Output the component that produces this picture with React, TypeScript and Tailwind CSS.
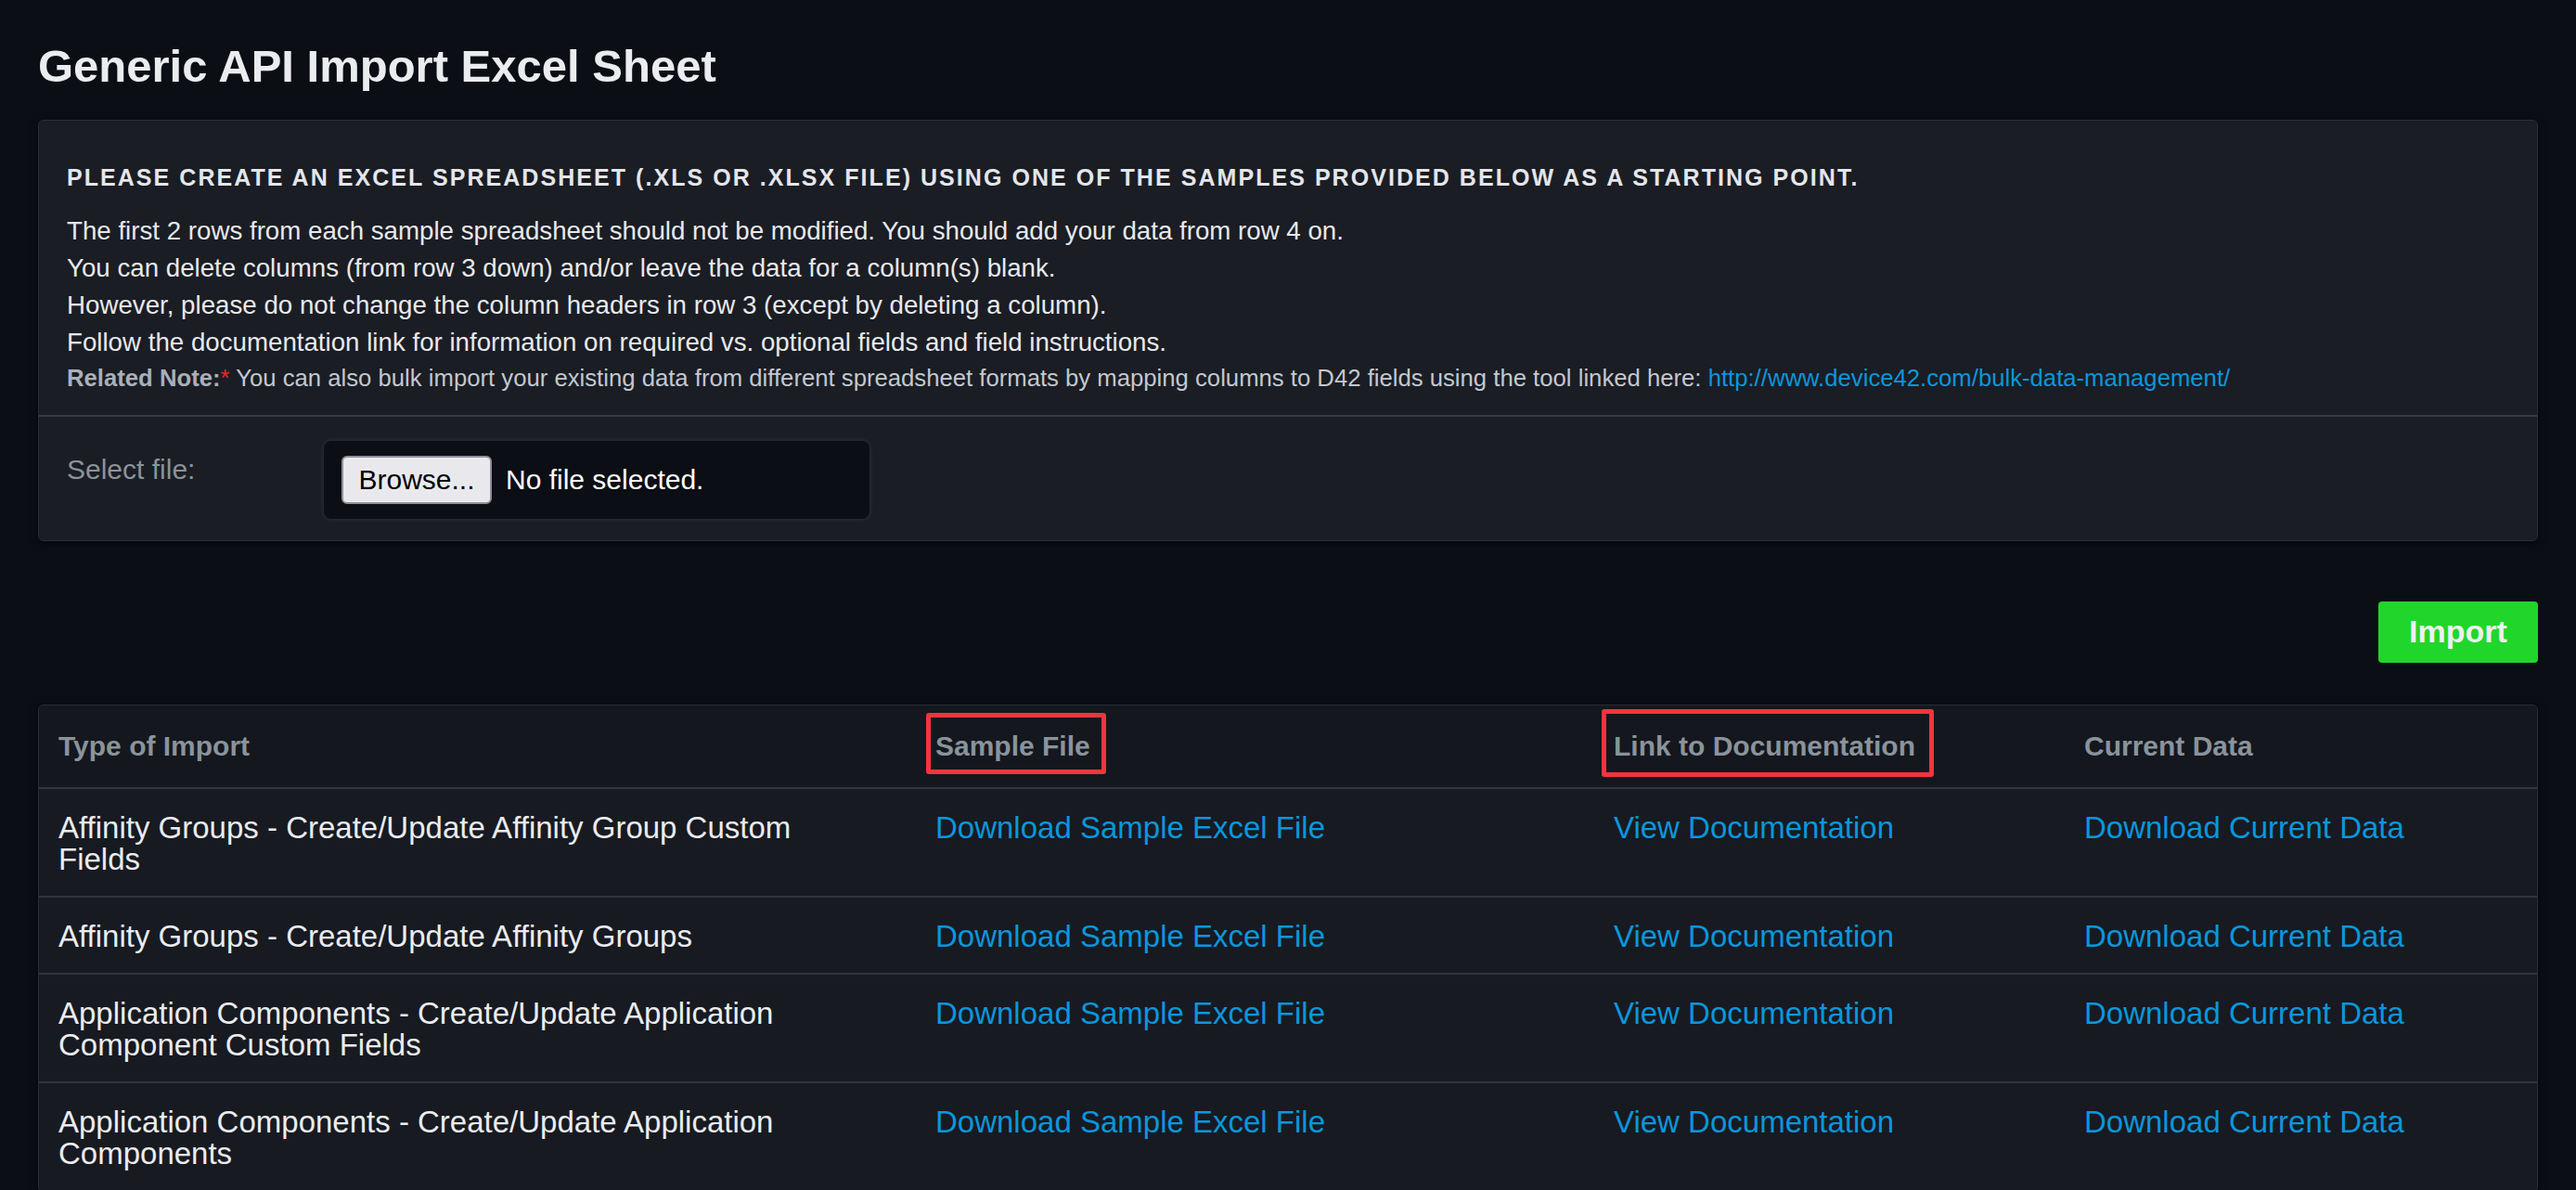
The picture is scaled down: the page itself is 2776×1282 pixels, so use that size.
const rows = [
  "Affinity Groups - Create/Update Affinity Group Custom Fields",
  "Affinity Groups - Create/Update Affinity Groups",
  "Application Components - Create/Update Application Component Custom Fields",
  "Application Components - Create/Update Application Components",
];

function Boxed({ children, cls }: { children: React.ReactNode; cls: string }) {
  return (
    <span className="relative inline-block">
      {children}
      <span className={"pointer-events-none absolute rounded-[3px] border-[5px] border-[#f5333f] " + cls} />
    </span>
  );
}

export default function App() {
  return (
    <div className="h-screen overflow-hidden bg-[#0b0e15] px-[41px] pt-[47px] font-['Liberation_Sans',Arial,sans-serif] text-[#e8e9ec]">
      <h1 className="text-[49px] font-bold leading-none text-[#ebecef]">Generic API Import Excel Sheet</h1>

      <div className="mt-[33px] rounded-[6px] border border-[#2a2d34] bg-[#1a1d24] shadow-[0_2px_10px_rgba(0,0,0,0.6)]">
        <div className="pl-[30px] pt-[49px] pb-[22px]">
          <h2 className="text-[25px] font-bold leading-none tracking-[2.05px] text-[#e4e6ea]">
            PLEASE CREATE AN EXCEL SPREADSHEET (.XLS OR .XLSX FILE) USING ONE OF THE SAMPLES PROVIDED BELOW AS A STARTING POINT.
          </h2>
          <div className="mt-[24.5px] text-[27.7px] leading-[40px] text-[#e8e9ec]">
            <p>The first 2 rows from each sample spreadsheet should not be modified. You should add your data from row 4 on.</p>
            <p>You can delete columns (from row 3 down) and/or leave the data for a column(s) blank.</p>
            <p>However, please do not change the column headers in row 3 (except by deleting a column).</p>
            <p>Follow the documentation link for information on required vs. optional fields and field instructions.</p>
          </div>
          <p className="text-[25.7px] leading-[36px] text-[#c3c8cf]">
            <span className="font-bold text-[#a9b0ba]">Related Note:</span>
            <span className="text-[#e5262d]">*</span> You can also bulk import your existing data from different spreadsheet formats by mapping columns to D42 fields using the tool linked here:{" "}
            <a className="text-[#0b96dc]" href="#">http://www.device42.com/bulk-data-management/</a>
          </p>
        </div>
        <div className="flex border-t-2 border-[#373a41] pl-[30px] pt-[26px] pb-[23px]">
          <div className="w-[277px] pt-[14px] text-[30px] leading-[34px] text-[#8a929a]">Select file:</div>
          <div className="flex h-[84px] w-[588px] items-center gap-[15px] rounded-[8px] bg-[#0b0e14] pl-[19px] shadow-[0_0_5px_rgba(255,255,255,0.12)]">
            <span className="flex h-[52px] w-[162px] items-center justify-center rounded-[6px] border-2 border-[#8f8f9d] bg-[#e9e9ed] text-[30px] text-black">
              Browse...
            </span>
            <span className="text-[30px] text-white">No file selected.</span>
          </div>
        </div>
      </div>

      <div className="mt-[65px] flex justify-end">
        <button className="h-[66px] w-[172px] rounded-[4px] bg-[#21d62a] text-[34px] font-bold text-[#eef0ef]">Import</button>
      </div>

      <div className="mt-[45px] overflow-hidden rounded-[6px] border border-[#2a2d34] bg-[#171a21] shadow-[0_2px_10px_rgba(0,0,0,0.6)]">
        <table className="w-full table-fixed border-collapse">
          <colgroup>
            <col className="w-[945px]" />
            <col className="w-[731px]" />
            <col className="w-[507px]" />
            <col />
          </colgroup>
          <thead>
            <tr className="border-b-2 border-[#33363d] bg-[#14171d]">
              <th className="pl-[21px] pt-[27px] pb-[27px] text-left align-top text-[30px] font-bold leading-[34px] text-[#8a939c]">Type of Import</th>
              <th className="pl-[21px] pt-[27px] pb-[27px] text-left align-top text-[30px] font-bold leading-[34px] text-[#8a939c]">
                <Boxed cls="-left-[10px] -right-[17px] -top-[19px] -bottom-[13px]">Sample File</Boxed>
              </th>
              <th className="pl-[21px] pt-[27px] pb-[27px] text-left align-top text-[30px] font-bold leading-[34px] text-[#8a939c]">
                <Boxed cls="-left-[13px] -right-[20px] -top-[23px] -bottom-[16px]">Link to Documentation</Boxed>
              </th>
              <th className="pl-[21px] pt-[27px] pb-[27px] text-left align-top text-[30px] font-bold leading-[34px] text-[#8a939c]">Current Data</th>
            </tr>
          </thead>
          <tbody>
            {rows.map((r) => (
              <tr key={r} className="border-b-2 border-[#30333a]">
                <td className="pl-[21px] pr-[80px] pt-[25px] pb-[22px] align-top text-[33px] leading-[34px] text-[#eaecef]">{r}</td>
                <td className="pl-[21px] pt-[25px] pb-[22px] align-top text-[33px] leading-[34px]">
                  <a href="#" className="text-[#0b96dc]">Download Sample Excel File</a>
                </td>
                <td className="pl-[21px] pt-[25px] pb-[22px] align-top text-[33px] leading-[34px]">
                  <a href="#" className="text-[#0b96dc]">View Documentation</a>
                </td>
                <td className="pl-[21px] pt-[25px] pb-[22px] align-top text-[33px] leading-[34px]">
                  <a href="#" className="text-[#0b96dc]">Download Current Data</a>
                </td>
              </tr>
            ))}
          </tbody>
        </table>
      </div>
    </div>
  );
}
